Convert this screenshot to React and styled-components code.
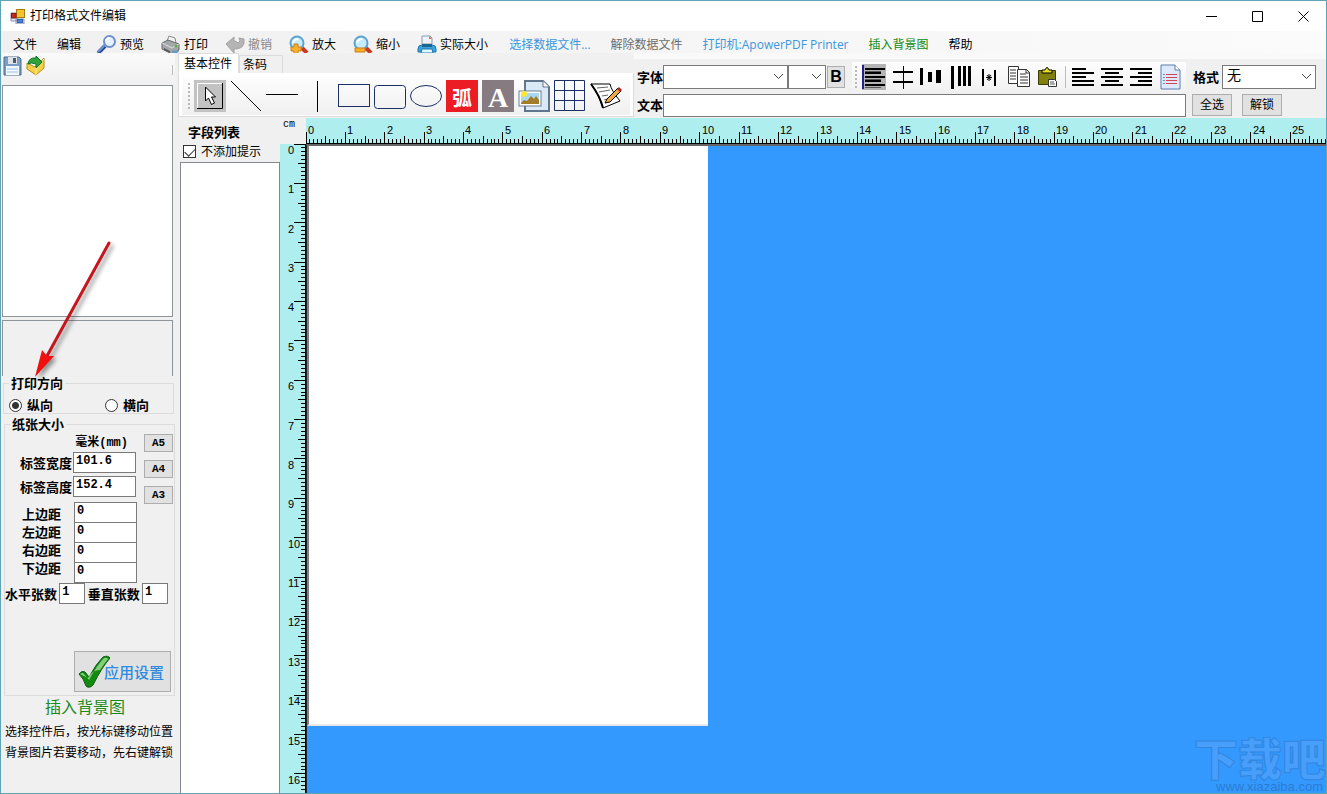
import React, { useEffect, useRef, useState } from 'react';
import styled, { createGlobalStyle, css } from 'styled-components';

const UI = `'Open Sans', 'Noto Sans CJK SC', sans-serif`;
const MONO = `'Liberation Mono', 'Noto Sans CJK SC', monospace`;
const CM = 39.37;

const GlobalStyle = createGlobalStyle`
  * {
    box-sizing: border-box;
  }

  body {
    margin: 0;
    font-family: ${UI};
    font-size: 12px;
    line-height: 16px;
    color: #000;
    background: #f0f0f0;
  }

  button, input, select {
    font: inherit;
    color: inherit;
    margin: 0;
    padding: 0;
    border-radius: 0;
  }

  svg {
    display: block;
    flex: none;
  }
`;

const Window = styled.div`
  display: flex;
  flex-direction: column;
  height: 100vh;
  overflow: hidden;
  border: 1px solid #5fa3b5;
`;

/* title bar */

const TitleBar = styled.header`
  display: flex;
  flex: none;
  align-items: center;
  height: 30px;
  padding-left: 9px;
  background: #fff;
`;

const Title = styled.h1`
  flex: 1;
  margin: 0 0 0 5px;
  font-size: 12px;
  font-weight: 400;
`;

const WindowButton = styled.button`
  display: grid;
  place-items: center;
  width: 46px;
  height: 30px;
  border: 0;
  background: none;
`;

/* menu */

const Menu = styled.nav`
  display: flex;
  flex: none;
  align-items: flex-start;
  gap: 16px;
  height: 22px;
  padding: 4px 0 0 8px;
  overflow: hidden;
  white-space: nowrap;
  background: linear-gradient(90deg, #f0f0f0, #f5f5f5 50%, #fbfbfb);
`;

const MenuButton = styled.button`
  display: flex;
  gap: 3px;
  height: 20px;
  line-height: 20px;
  padding: ${(p) => (p.$icon ? '0 1px 0 0' : '0 0 0 4px')};
  border: 0;
  background: none;
  color: ${(p) => p.$color || '#000'};
`;

const Body = styled.div`
  display: flex;
  flex: 1;
  min-height: 0;
`;

/* left side */

const Sidebar = styled.aside`
  display: flex;
  flex-direction: column;
  flex: none;
  width: 176px;
  padding: 0 2px 0 1px;
  overflow: hidden;
`;

const FileTools = styled.div`
  display: flex;
  flex: none;
  gap: 4px;
  height: 32px;
  padding: 3px 1px;
  background: linear-gradient(#fafafa, #f0f0f0);
`;

const PlainButton = styled.button`
  display: flex;
  border: 0;
  background: none;
`;

const FileSeparator = styled.span`
  width: 1px;
  height: 10px;
  margin: 9px 1px 0 auto;
  background: #bdbdbd;
`;

const FileList = styled.div`
  flex: none;
  width: 171px;
  height: 232px;
  border: 1px solid #8f9499;
  background: #fff;
`;

const InfoBox = styled.div`
  flex: none;
  width: 171px;
  height: 56px;
  margin-top: 3px;
  border: 1px solid #8f9499;
  border-bottom: 0;
`;

const Group = styled.fieldset`
  flex: none;
  width: 171px;
  min-width: 0;
  margin: ${(p) => (p.$paper ? '3px 0 0 2px' : '0 0 0 1px')};
  padding: 0;
  height: ${(p) => (p.$paper ? '279px' : '38px')};
  border: 1px solid #dcdcdc;
  font-size: 13px;
  font-weight: 700;
`;

const Legend = styled.legend`
  margin-left: 5px;
  padding: 0 2px;
  line-height: 14px;
`;

const RadioRow = styled.div`
  display: flex;
  gap: 52px;
  padding: 6px 0 0 5px;
`;

const RadioLabel = styled.label`
  display: flex;
  align-items: center;
  gap: 5px;
  line-height: 18px;
`;

const Radio = styled.input`
  appearance: none;
  width: 13px;
  height: 13px;
  border: 1px solid #333;
  border-radius: 50%;
  background: #fff;

  &:checked {
    background: radial-gradient(circle, #333 3px, #fff 4px);
  }
`;

const PaperColumns = styled.div`
  display: flex;
  justify-content: space-between;
`;

const SizeColumn = styled.div`
  display: flex;
  flex-direction: column;
  width: 131px;
`;

const Unit = styled.div`
  height: 21px;
  padding: 4px 8px 0 0;
  text-align: right;
  font-family: ${MONO};
  font-size: 12px;
`;

const Field = styled.div`
  display: flex;
  align-items: center;
  justify-content: flex-end;
  gap: 1px;
  margin-bottom: 3px;
`;

const ValueInput = styled.input`
  width: ${(p) => p.$width || '63px'};
  height: 21px;
  padding: 0 2px 3px;
  border: 1px solid #7a7a7a;
  background: #fff;
  font-family: ${MONO};
  font-size: 12px;
  font-weight: 700;
`;

const Margins = styled.div`
  display: flex;
  justify-content: space-between;
  margin: 2px 0 0 17px;
  width: 115px;
`;

const MarginLabels = styled.div`
  display: flex;
  flex-direction: column;
  padding-top: 3px;
  line-height: 18px;
`;

const MarginInputs = styled.div`
  display: flex;
  flex-direction: column;

  input + input {
    margin-top: -1px;
  }
`;

const SizeButtons = styled.div`
  display: flex;
  flex-direction: column;
  gap: 8px;
  padding: 3px 1px 0 0;
`;

const SizeButton = styled.button`
  width: 29px;
  height: 18px;
  border: 1px solid #adadad;
  background: #e1e1e1;
  font-family: ${MONO};
  font-size: 11px;
  font-weight: 700;
  line-height: 14px;
`;

const Counts = styled.div`
  display: flex;
  align-items: center;
  justify-content: space-between;
  width: 163px;
`;

const ApplyButton = styled.button`
  display: flex;
  align-items: center;
  width: 97px;
  height: 41px;
  margin: 47px 0 0 69px;
  padding-left: 2px;
  border: 1px solid #adadad;
  background: #e1e1e1;
  color: #2d8be0;
  font-size: 15px;
  font-weight: 500;
  white-space: nowrap;

  svg {
    margin-right: -6px;
  }
`;

const BackgroundLink = styled.a`
  align-self: flex-start;
  margin: 1px 0 4px 43px;
  color: #1a8a1a;
  font-size: 16px;
  line-height: 20px;
  text-decoration: none;
`;

const Hint = styled.p`
  margin: 0 0 0 3px;
  line-height: 21px;
  white-space: nowrap;
`;

/* right side */

const Main = styled.main`
  display: flex;
  flex-direction: column;
  flex: 1;
  min-width: 0;
`;

const Ribbon = styled.div`
  display: flex;
  flex: none;
  height: 65px;
`;

const TabPanel = styled.section`
  flex: none;
  width: 457px;
  padding-left: 1px;
`;

const Tabs = styled.div`
  display: flex;
  align-items: flex-end;
`;

const Tab = styled.button`
  height: ${(p) => (p.$active ? '20px' : '18px')};
  padding: ${(p) => (p.$active ? '0 6px 0 5px' : '0 15px 0 3px')};
  border: 1px solid #dcdcdc;
  border-bottom: 0;
  background: ${(p) => (p.$active ? '#fff' : '#f0f0f0')};
`;

const TabBody = styled.div`
  height: 44px;
  padding: 3px;
  border: 1px solid #dcdcdc;
  border-top-color: #fff;
  background: #fff;
`;

const ShapeBar = styled.div`
  display: flex;
  align-items: center;
  gap: 4px;
  height: 38px;
  padding-left: 6px;
  background: linear-gradient(#fdfdfd, #f0f0f0);
`;

const Grip = styled.span`
  flex: none;
  width: 2px;
  height: ${(p) => p.$height};
  background: repeating-linear-gradient(#b8b8b8 0 2px, transparent 2px 4px);
`;

const Tool = styled.button`
  display: grid;
  place-items: center;
  flex: none;
  width: 32px;
  height: 32px;
  border: 0;
  background: ${(p) => p.$fill || 'none'};
  ${(p) =>
    p.$letter &&
    css`
      padding-top: 4px;
      color: #fff;
      font-family: ${p.$letter};
      font-size: ${p.$size};
      font-weight: 700;
    `}
`;

const Format = styled.section`
  display: flex;
  flex-direction: column;
  flex: 1;
  min-width: 0;
  border-top: 6px solid #f9f9f9;
  padding: 2px 10px 0 3px;
`;

const FormatRow = styled.div`
  display: flex;
  align-items: center;
  height: ${(p) => p.$height};
`;

const BoldLabel = styled.label`
  flex: none;
  width: 26px;
  font-size: 13px;
  font-weight: 700;
`;

const SelectBox = styled.span`
  display: grid;
  flex: none;
  align-items: center;
  width: ${(p) => p.$width};

  select {
    grid-area: 1 / 1;
    appearance: none;
    width: 100%;
    height: 24px;
    padding: 0 4px 4px;
    border: 1px solid #7a7a7a;
    background: #fff;
    font-size: 14px;
  }

  svg {
    grid-area: 1 / 1;
    justify-self: end;
    margin-right: 4px;
    pointer-events: none;
  }
`;

const BoldButton = styled.button`
  width: 18px;
  height: 22px;
  margin-left: 1px;
  border: 1px solid #adadad;
  background: #e1e1e1;
  font-family: 'Liberation Sans', sans-serif;
  font-size: 16px;
  font-weight: 700;
`;

const AlignBar = styled.div`
  display: flex;
  align-items: center;
  flex: 1;
  gap: 5px;
  height: 30px;
  margin-left: 7px;
  padding-left: 3px;
  background: linear-gradient(#fdfdfd, #f1f1f1);
`;

const AlignTool = styled.button`
  display: grid;
  place-items: center;
  flex: none;
  width: 24px;
  height: 26px;
  border: 0;
  background: ${(p) => p.$fill || 'none'};
`;

const AlignSeparator = styled.span`
  width: 1px;
  height: 22px;
  background: #bdbdbd;
`;

const FormatEnd = styled.div`
  display: flex;
  align-items: center;
  flex: none;
  gap: ${(p) => p.$gap};
  width: 130px;
  padding-left: ${(p) => p.$pad};
`;

const TextInput = styled.input`
  flex: 1;
  min-width: 0;
  height: 23px;
  padding: 0 4px;
  border: 1px solid #7a7a7a;
  background: #fff;
`;

const SmallButton = styled.button`
  width: 40px;
  height: 22px;
  border: 1px solid #adadad;
  background: #e1e1e1;
`;

const Workspace = styled.div`
  display: flex;
  flex: 1;
  min-height: 0;
`;

const FieldPanel = styled.section`
  display: flex;
  flex-direction: column;
  flex: none;
  width: 103px;
  padding: 5px 0 0 3px;
`;

const FieldTitle = styled.h2`
  margin: 0 0 0 8px;
  font-size: 13px;
  font-weight: 700;
  line-height: 18px;
`;

const CheckLabel = styled.label`
  display: flex;
  align-items: center;
  gap: 5px;
  height: 21px;
  padding-left: 3px;
`;

const Check = styled.input`
  appearance: none;
  display: grid;
  place-items: center;
  width: 13px;
  height: 13px;
  border: 1px solid #333;
  background: #fff;

  &:checked::after {
    content: '';
    width: 9px;
    height: 5px;
    border: solid #333;
    border-width: 0 0 1px 1px;
    transform: translateY(-1px) rotate(-45deg);
  }
`;

const FieldList = styled.div`
  flex: 1;
  border: 1px solid #828790;
  border-bottom: 0;
  background: #fff;
`;

const Sheet = styled.section`
  display: grid;
  flex: 1;
  min-width: 0;
  grid-template: 26px minmax(0, 1fr) / 26px minmax(0, 1fr);
`;

const Corner = styled.div`
  padding-left: 3px;
  font-family: 'Liberation Mono', monospace;
  font-size: 10px;
  line-height: 14px;
`;

const RulerBox = styled.div`
  min-width: 0;
  min-height: 0;
  overflow: hidden;
  background: #afeeee;

  text {
    font-family: 'Liberation Sans', sans-serif;
    font-size: 11px;
  }
`;

const Canvas = styled.div`
  position: relative;
  overflow: hidden;
  border-top: 2px solid #666;
  border-left: 1px solid #222;
  background: #3399ff;
`;

const Paper = styled.div`
  width: 401px;
  height: 580px;
  border: solid #808080;
  border-width: 0 0 0 2px;
  border-bottom: 2px solid #e8e8e8;
  background: #fff;
`;

const Watermark = styled.div`
  position: absolute;
  right: 0;
  bottom: 0;
  text-align: right;
  color: #479efb;
  -webkit-text-stroke: 1px #3286e0;
`;

const WatermarkName = styled.div`
  font-family: 'Noto Sans CJK SC', sans-serif;
  font-size: 44px;
  font-weight: 900;
  line-height: 48px;
`;

const WatermarkUrl = styled.div`
  padding-right: 3px;
  color: #2c7cd0;
  font-family: 'Liberation Sans', sans-serif;
  font-size: 13px;
  line-height: 12px;
  -webkit-text-stroke: 0;
`;

const Pointer = styled.svg`
  position: absolute;
  left: 28px;
  top: 236px;
  pointer-events: none;
  filter: drop-shadow(3px 3px 2px rgba(0, 0, 0, 0.4));
`;

/* icons */

const AppIcon = () => (
  <svg width="15" height="15" viewBox="0 0 15 15">
    <path d="M1 4h6v8H1zM6 10h8v5H6z" fill="#dde6f2" stroke="#8795ac" />
    <rect x="6.5" y=".5" width="8" height="8" fill="#f5c332" stroke="#a67c0a" />
    <rect x="1.5" y="4.500" width="4.500" height="4.500" fill="#c52b20" stroke="#821a12" />
    <rect x="7.500" y="10.500" width="5" height="3" fill="#4d83dc" stroke="#3360aa" />
  </svg>
);

const Preview = () => (
  <svg width="20" height="20" viewBox="0 0 20 20">
    <path d="M1 18l7-7" stroke="#23468f" strokeWidth="4" />
    <path d="M1 17l7-7" stroke="#6e95d6" strokeWidth="2" />
    <circle cx="12.500" cy="6.500" r="5.500" fill="#e4f2ff" stroke="#6c90cc" strokeWidth="2" />
    <path d="M9 6a4 4 0 0 1 4-3" stroke="#fff" strokeWidth="2" fill="none" />
  </svg>
);

const PrinterGray = () => (
  <svg width="20" height="20" viewBox="0 0 20 20">
    <path d="M6 6l2-5 6 2 1 5" fill="#f4f4f4" stroke="#888" />
    <path d="M1 8l6-3 11 4v6l-7 4-10-5z" fill="#a5a8ab" stroke="#65686a" />
    <path d="M1 8l10 5 7-4" fill="none" stroke="#e0e0e0" />
    <path d="M3 13l6 3v2l-6-3z" fill="#595c5e" />
    <path d="M12 15l6 1-3 4-5-1z" fill="#6a9cc2" />
    <circle cx="15" cy="11" r="1.500" fill="#62b04e" />
  </svg>
);

const Undo = () => (
  <svg width="20" height="20" viewBox="0 0 20 20">
    <path d="M1 9l8-7v4q3 0 4 2l2-2-1-3 5 1v4q-1 6-10 6v4z" fill="#b4b4b4" stroke="#a2a2a2" />
  </svg>
);

const Zoomer = ({ plus }) => (
  <svg width="20" height="20" viewBox="0 0 20 20">
    <path d="M12 12l6 6" stroke="#c63b21" strokeWidth="4" />
    <circle cx="8" cy="8" r="6.500" fill="#c6edfd" stroke="#5da3cf" strokeWidth="2" />
    <path d="M4 8q1-4 5-4" stroke="#fff" strokeWidth="2" fill="none" />
    {plus ? (
      <path d="M5 9h4v3h3v4H9v3H5v-3H2v-4h3z" fill="#f7b02e" stroke="#cc7d12" />
    ) : (
      <path d="M2 13h10v4H2z" fill="#f7b02e" stroke="#cc7d12" />
    )}
  </svg>
);

const PrinterBlue = () => (
  <svg width="20" height="20" viewBox="0 0 20 20">
    <path d="M5 9V1h8l2 2v6z" fill="#edf3fa" stroke="#8a9bae" />
    <path d="M12 1v3h3" fill="#e07050" />
    <path d="M1 14q0-4 4-4h10q4 0 4 4v3H1z" fill="#3aa5dd" stroke="#1778ae" />
    <path d="M5 9h10v3H5z" fill="#1b658f" />
    <path d="M5 14h10l1 4H4z" fill="#e8f6ff" stroke="#1778ae" />
  </svg>
);

const SaveIcon = () => (
  <svg width="19" height="20" viewBox="0 0 19 20">
    <path d="M1 1h15l2 2v16H1z" fill="#7b9fc4" stroke="#496b91" />
    <path d="M5 1h9v7H5z" fill="#dfe3e8" />
    <path d="M10 2h3v5h-3z" fill="#4c5a6c" />
    <path d="M3 10h13v9H3z" fill="#f1f8ff" />
    <path d="M4 13h11M4 16h11" stroke="#9dc2e6" />
  </svg>
);

const OpenIcon = () => (
  <svg width="19" height="20" viewBox="0 0 19 20">
    <path d="M1 7l8 4 9-9v10l-8 7-9-6z" fill="#f6d048" stroke="#bb8c18" />
    <path d="M10 19v-8l8-8" fill="none" stroke="#fff0a0" />
    <path d="M2 8q1-7 8-6V0l6 6-6 6V8Q5 6 2 8z" fill="#2ea53b" stroke="#14762a" />
  </svg>
);

const CheckMark = () => (
  <svg width="33" height="34" viewBox="0 0 33 34">
    <path d="M2 19q3-4 6-2l4 5Q19 9 26 2q5-2 7 1-8 9-17 27-4 4-7 1-2-7-7-12z" fill="#12890f" stroke="#0d5c12" />
    <path d="M3 19q3-2 4 0l5 6Q20 10 27 3q3-1 4 1-4 5-8 11-8 0-12 8-2-1-8-4z" fill="#a8e79c" opacity=".75" />
  </svg>
);

const Chevron = () => (
  <svg width="11" height="7" viewBox="0 0 11 7" fill="none" stroke="#444">
    <path d="M1 1l4.500 4.500L10 1" />
  </svg>
);

const Cursor = () => (
  <svg width="32" height="32" viewBox="0 0 32 32">
    <rect width="32" height="32" fill="#c2c2c2" />
    <path d="M3.500 29V3.500H29" fill="none" stroke="#fff" />
    <path d="M3 28.500h25.500V3" fill="none" stroke="#000" />
    <path d="M11.500 7v14l3-3 3 6.500 3-1.500-3-6h4z" fill="#fff" stroke="#000" />
  </svg>
);

const Shape = ({ children }) => (
  <svg width="32" height="32" viewBox="0 0 32 32" fill="none" stroke="#1c2f66">
    {children}
  </svg>
);

const PictureIcon = () => (
  <svg width="32" height="32" viewBox="0 0 32 32">
    <path d="M7 1h18l6 6v24H7z" fill="#dbe8f6" stroke="#61758c" strokeWidth="2" />
    <path d="M25 1v6h6" fill="#fff" stroke="#61758c" />
    <rect x="1" y="11" width="22" height="15" fill="#fff" stroke="#6a7e99" />
    <path d="M3 13h18v11H3z" fill="#a8d8f2" />
    <path d="M3 23l3-3 3 1 4-5 3 3 2-3 3 4v4H3z" fill="#a37c28" />
    <circle cx="6" cy="14" r="3" fill="#fae838" />
  </svg>
);

const NoteIcon = () => (
  <svg width="32" height="32" viewBox="0 0 32 32">
    <path d="M1 4h19q1 6 10 17L13 28Q10 16 1 4z" fill="#fff" stroke="#000" />
    <path d="M1 4q9 12 12 24" fill="none" stroke="#000" strokeWidth="2" />
    <path d="M7 8l11-1M9 12l11-2M12 16l6-1M14 20l3-1" stroke="#666" />
    <path d="M17 19L28 8l3 3-11 11-5 1z" fill="#eda942" stroke="#000" />
    <path d="M27 9l2-2 3 3-2 2z" fill="#b42222" />
  </svg>
);

const Lines = ({ rows, children }) => (
  <svg width="24" height="24" viewBox="0 0 24 24" fill="none" stroke="#000" strokeWidth="2">
    {rows && rows.map(([x, w], i) => <path key={i} d={`M${x} ${4 + i * 4}h${w}`} />)}
    {children}
  </svg>
);

const CopyIcon = () => (
  <svg width="24" height="24" viewBox="0 0 24 24" fill="#fff" stroke="#333">
    <path d="M1.500 1.500h10v17h-10z" />
    <path d="M10.500 4.500h9l3 3v14h-12z" />
    <path d="M3 5h6M3 8h6M3 11h6M3 14h6M13 9h6M13 12h8M13 15h8M13 18h8M19 4v4h4" fill="none" />
  </svg>
);

const PasteIcon = () => (
  <svg width="24" height="24" viewBox="0 0 24 24">
    <path d="M2.500 5.500h17v14h-17z" fill="#80800a" stroke="#3c3c05" />
    <path d="M6 8V5h3q2-5 4 0h3v3z" fill="#e6df22" stroke="#000" />
    <path d="M12.500 14.500h6l2 2v5h-8z" fill="#fff" stroke="#333" />
    <path d="M14 17h4M14 19h5" stroke="#555" />
  </svg>
);

const PageIcon = () => (
  <svg width="21" height="26" viewBox="0 0 21 26">
    <path d="M1 1h14l5 5v19H1z" fill="#dbe9fb" stroke="#5c7caf" />
    <path d="M15 1v5h5" fill="#fff" stroke="#5c7caf" />
    <path d="M6 10.500h11M6 13.500h11M6 16.500h11M6 19.500h11" stroke="#d84350" />
    <path d="M3 10.500h2M3 13.500h2M3 16.500h2M3 19.500h2" stroke="#7a8ca5" />
  </svg>
);

const menuItems = [
  { label: '文件' },
  { label: '编辑' },
  { label: '预览', icon: <Preview /> },
  { label: '打印', icon: <PrinterGray /> },
  { label: '撤销', icon: <Undo />, color: '#888' },
  { label: '放大', icon: <Zoomer plus /> },
  { label: '缩小', icon: <Zoomer /> },
  { label: '实际大小', icon: <PrinterBlue /> },
  { label: '选择数据文件...', color: '#3c96dc' },
  { label: '解除数据文件', color: '#6d6d6d' },
  { label: '打印机:ApowerPDF Printer', color: '#3c96dc' },
  { label: '插入背景图', color: '#0f8a0f' },
  { label: '帮助' },
];

const shapes = [
  { name: '选择', icon: <Cursor /> },
  { name: '斜线', icon: <Shape><path d="M1 1l30 30" stroke="#000" /></Shape> },
  { name: '横线', icon: <Shape><path d="M0 14.500h32" stroke="#000" /></Shape> },
  { name: '竖线', icon: <Shape><path d="M15.500 1v31" stroke="#000" /></Shape> },
  { name: '矩形', icon: <Shape><rect x=".5" y="4.500" width="31" height="22" /></Shape> },
  { name: '圆角矩形', icon: <Shape><rect x=".5" y="5.500" width="31" height="23" rx="3" /></Shape> },
  { name: '椭圆', icon: <Shape><ellipse cx="16" cy="16" rx="15.500" ry="10.500" /></Shape> },
  { name: '弧', text: '弧', fill: '#ec1c24', font: `'Noto Sans CJK SC', sans-serif`, size: '20px' },
  { name: '文字', text: 'A', fill: '#857b80', font: `'Liberation Serif', serif`, size: '28px' },
  { name: '图片', icon: <PictureIcon /> },
  {
    name: '表格',
    icon: <Shape><path d="M.5.500h30v30H.5zM10.500.500v30M20.500.500v30M.5 10.500h30M.5 20.500h30" /></Shape>,
  },
  { name: '备注', icon: <NoteIcon /> },
];

const alignTools = [
  {
    name: '左对齐控件',
    fill: '#b4b4b4',
    icon: (
      <Lines rows={[[3, 20], [3, 16], [3, 20], [3, 16], [3, 20]]}>
        <path d="M1 0v24" stroke="#22228a" />
        <path d="M3 6.500h16M3 14.500h16M3 22.500h16" stroke="#555" strokeWidth="1" />
      </Lines>
    ),
  },
  { name: '居中控件', icon: <Lines><path d="M2 7h20M2 17h20" /><path d="M12.500 1v23" strokeWidth="1" /></Lines> },
  {
    name: '水平等距',
    icon: <Lines><path d="M1.500 3v17" strokeWidth="3" /><path d="M10 7v10" strokeWidth="4" /><path d="M18.500 5v13" strokeWidth="5" /></Lines>,
  },
  { name: '垂直等距', icon: <Lines><path d="M3.500 1v23M10.500 1v20M15.500 1v20M20.500 1v20" strokeWidth="3" /></Lines> },
  {
    name: '居中间距',
    icon: <Lines><path d="M5 4v17M17 5v16" /><path d="M8 12.500h6M11 9v7M9 10l4 5M13 10l-4 5" strokeWidth="1" /></Lines>,
  },
  { name: '复制', icon: <CopyIcon /> },
  { name: '粘贴', icon: <PasteIcon /> },
];

const textTools = [
  { name: '文字左对齐', icon: <Lines rows={[[1, 14], [1, 22], [1, 14], [1, 22], [1, 22]]} /> },
  { name: '文字居中', icon: <Lines rows={[[1, 22], [5, 14], [1, 22], [5, 14], [1, 22]]} /> },
  { name: '文字右对齐', icon: <Lines rows={[[1, 22], [9, 14], [1, 22], [9, 14], [1, 22]]} /> },
  { name: '页面', icon: <PageIcon /> },
];

const margins = ['上边距', '左边距', '右边距', '下边距'];

function Ruler({ vertical }) {
  const box = useRef(null);
  const [length, setLength] = useState(0);

  useEffect(() => {
    const measure = () => {
      setLength(vertical ? box.current.clientHeight : box.current.clientWidth);
    };
    measure();
    window.addEventListener('resize', measure);
    return () => window.removeEventListener('resize', measure);
  }, [vertical]);

  let ticks = '';
  for (let mm = 0; (mm * CM) / 10 < length; mm += 1) {
    const at = Math.floor((mm * CM) / 10) + 0.5;
    const size = mm % 10 === 0 ? 12 : mm % 5 === 0 ? 8 : 5;
    ticks += vertical ? `M26 ${at}h-${size}` : `M${at} 26v-${size}`;
  }
  // a number is left out when it would run over the end
  const numbers = Array.from({ length: Math.max(0, Math.ceil((length - 16) / CM)) }, (_, i) => i);

  return (
    <RulerBox ref={box}>
      <svg width={vertical ? 26 : length} height={vertical ? length : 26}>
        <path d={ticks} stroke="#000" shapeRendering="crispEdges" />
        <path d={vertical ? `M25.500 0v${length}` : `M0 25.500h${length}`} stroke="#000" />
        {numbers.map((n) => {
          const at = Math.round(n * CM);
          return (
            <text key={n} x={vertical ? 8 : at + 2} y={vertical ? at + 10 : 16}>
              {n}
            </text>
          );
        })}
      </svg>
    </RulerBox>
  );
}

function Settings() {
  return (
    <Sidebar>
      <FileTools>
        <PlainButton aria-label="保存"><SaveIcon /></PlainButton>
        <PlainButton aria-label="打开"><OpenIcon /></PlainButton>
        <FileSeparator />
      </FileTools>
      <FileList />
      <InfoBox />
      <Group>
        <Legend>打印方向</Legend>
        <RadioRow>
          <RadioLabel><Radio type="radio" name="direction" defaultChecked />纵向</RadioLabel>
          <RadioLabel><Radio type="radio" name="direction" />横向</RadioLabel>
        </RadioRow>
      </Group>
      <Group $paper>
        <Legend>纸张大小</Legend>
        <PaperColumns>
          <SizeColumn>
            <Unit>毫米(mm)</Unit>
            <Field>
              <label htmlFor="width">标签宽度</label>
              <ValueInput id="width" defaultValue="101.6" />
            </Field>
            <Field>
              <label htmlFor="height">标签高度</label>
              <ValueInput id="height" defaultValue="152.4" />
            </Field>
            <Margins>
              <MarginLabels>
                {margins.map((m, i) => <label key={m} htmlFor={`margin-${i}`}>{m}</label>)}
              </MarginLabels>
              <MarginInputs>
                {margins.map((m, i) => <ValueInput key={m} id={`margin-${i}`} defaultValue="0" />)}
              </MarginInputs>
            </Margins>
          </SizeColumn>
          <SizeButtons>
            <SizeButton>A5</SizeButton>
            <SizeButton>A4</SizeButton>
            <SizeButton>A3</SizeButton>
          </SizeButtons>
        </PaperColumns>
        <Counts>
          <label htmlFor="columns">水平张数</label>
          <ValueInput id="columns" $width="26px" defaultValue="1" />
          <label htmlFor="rows">垂直张数</label>
          <ValueInput id="rows" $width="26px" defaultValue="1" />
        </Counts>
        <ApplyButton><CheckMark />应用设置</ApplyButton>
      </Group>
      <BackgroundLink href="#background">插入背景图</BackgroundLink>
      <Hint>选择控件后，按光标键移动位置</Hint>
      <Hint>背景图片若要移动，先右键解锁</Hint>
    </Sidebar>
  );
}

function Toolbars() {
  return (
    <Ribbon>
      <TabPanel>
        <Tabs>
          <Tab $active>基本控件</Tab>
          <Tab>条码</Tab>
        </Tabs>
        <TabBody>
          <ShapeBar>
            <Grip $height="26px" />
            {shapes.map((s) => (
              <Tool key={s.name} aria-label={s.name} $fill={s.fill} $letter={s.font} $size={s.size}>
                {s.icon || s.text}
              </Tool>
            ))}
          </ShapeBar>
        </TabBody>
      </TabPanel>
      <Format>
        <FormatRow $height="31px">
          <BoldLabel htmlFor="font">字体</BoldLabel>
          <SelectBox $width="125px"><select id="font" /><Chevron /></SelectBox>
          <SelectBox $width="38px"><select aria-label="字号" /><Chevron /></SelectBox>
          <BoldButton>B</BoldButton>
          <AlignBar>
            <Grip $height="22px" />
            {alignTools.map((t) => (
              <AlignTool key={t.name} aria-label={t.name} $fill={t.fill}>{t.icon}</AlignTool>
            ))}
            <AlignSeparator />
            {textTools.map((t) => (
              <AlignTool key={t.name} aria-label={t.name}>{t.icon}</AlignTool>
            ))}
          </AlignBar>
          <FormatEnd $gap="3px" $pad="7px">
            <BoldLabel htmlFor="format">格式</BoldLabel>
            <SelectBox $width="94px">
              <select id="format"><option>无</option></select>
              <Chevron />
            </SelectBox>
          </FormatEnd>
        </FormatRow>
        <FormatRow $height="26px">
          <BoldLabel htmlFor="text">文本</BoldLabel>
          <TextInput id="text" />
          <FormatEnd $gap="10px" $pad="6px">
            <SmallButton>全选</SmallButton>
            <SmallButton>解锁</SmallButton>
          </FormatEnd>
        </FormatRow>
      </Format>
    </Ribbon>
  );
}

export default function App() {
  return (
    <Window>
      <GlobalStyle />
      <TitleBar>
        <AppIcon />
        <Title>打印格式文件编辑</Title>
        <WindowButton aria-label="最小化">
          <svg width="11" height="11" stroke="#000"><path d="M0 5.500h11" /></svg>
        </WindowButton>
        <WindowButton aria-label="最大化">
          <svg width="11" height="11" stroke="#000" fill="none"><path d="M.5.500h10v10H.5z" /></svg>
        </WindowButton>
        <WindowButton aria-label="关闭">
          <svg width="11" height="11" stroke="#000"><path d="M.5.500l10 10M10.500.500l-10 10" /></svg>
        </WindowButton>
      </TitleBar>
      <Menu>
        {menuItems.map((m) => (
          <MenuButton key={m.label} $icon={!!m.icon} $color={m.color}>
            {m.icon}
            {m.label}
          </MenuButton>
        ))}
      </Menu>
      <Body>
        <Settings />
        <Main>
          <Toolbars />
          <Workspace>
            <FieldPanel>
              <FieldTitle>字段列表</FieldTitle>
              <CheckLabel><Check type="checkbox" defaultChecked />不添加提示</CheckLabel>
              <FieldList />
            </FieldPanel>
            <Sheet>
              <Corner>cm</Corner>
              <Ruler />
              <Ruler vertical />
              <Canvas>
                <Paper />
                <Watermark>
                  <WatermarkName>下载吧</WatermarkName>
                  <WatermarkUrl>www.xiazaiba.com</WatermarkUrl>
                </Watermark>
              </Canvas>
            </Sheet>
          </Workspace>
        </Main>
      </Body>
      <Pointer width="90" height="150" viewBox="28 236 90 150">
        <path d="M109 243L47 356" stroke="#c4161c" strokeWidth="3" strokeLinecap="round" />
        <path d="M35 377l7-27 5 6 7 0z" fill="#f01010" />
      </Pointer>
    </Window>
  );
}
